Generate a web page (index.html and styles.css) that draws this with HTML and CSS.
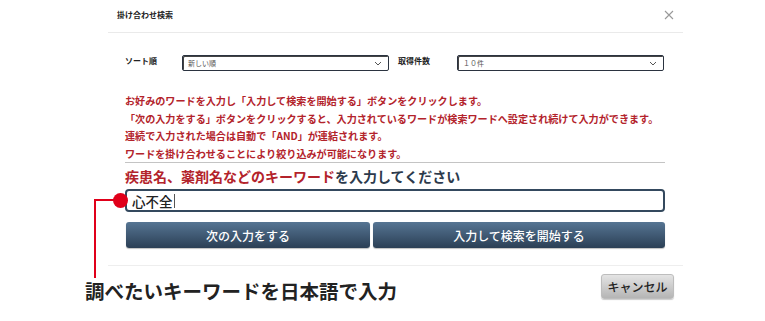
FILE: index.html
```html
<!DOCTYPE html>
<html lang="ja">
<head>
<meta charset="utf-8">
<link rel="stylesheet" href="styles.css">
</head>
<body>
<div class="page">
  <div class="modal">
    <div class="modal-header">
      <span class="modal-title">掛け合わせ検索</span>
      <span class="close">
        <svg width="10" height="10" viewBox="0 0 10 10"><path d="M1 1L9 9M9 1L1 9" stroke="#999" stroke-width="1.1" fill="none"/></svg>
      </span>
    </div>
    <div class="modal-body">
      <div class="options">
        <span class="opt-label opt-label-1">ソート順</span>
        <div class="select select-1"><span>新しい順</span><svg width="8" height="5" viewBox="0 0 8 5"><path d="M1 1L4 4L7 1" stroke="#555" stroke-width="1" fill="none"/></svg></div>
        <span class="opt-label opt-label-2">取得件数</span>
        <div class="select select-2"><span>１０件</span><svg width="8" height="5" viewBox="0 0 8 5"><path d="M1 1L4 4L7 1" stroke="#555" stroke-width="1" fill="none"/></svg></div>
      </div>
      <div class="notes">
        <p>お好みのワードを入力し「入力して検索を開始する」ボタンをクリックします。</p>
        <p>「次の入力をする」ボタンをクリックすると、入力されているワードが検索ワードへ設定され続けて入力ができます。</p>
        <p>連続で入力された場合は自動で「AND」が連結されます。</p>
        <p>ワードを掛け合わせることにより絞り込みが可能になります。</p>
      </div>
      <div class="search">
        <h2 class="search-title"><span class="accent">疾患名、薬剤名などのキーワード</span>を入力してください</h2>
        <div class="input"><span>心不全</span><span class="caret"></span></div>
        <div class="buttons">
          <button class="btn btn-next">次の入力をする</button>
          <button class="btn btn-start">入力して検索を開始する</button>
        </div>
      </div>
    </div>
    <div class="modal-footer">
      <button class="btn-cancel">キャンセル</button>
    </div>
  </div>
  <div class="annotation">
    <span class="dot"></span>
    <span class="hline"></span>
    <span class="vline"></span>
  </div>
  <div class="callout">調べたいキーワードを日本語で入力</div>
</div>
</body>
</html>
```
FILE: styles.css
```css
* { box-sizing: border-box; margin: 0; padding: 0; }
html, body { background: #fff; }
body {
  font-family: "Noto Sans CJK JP", "Noto Sans", sans-serif;
  color: #222;
  width: 765px;
  height: 321px;
  overflow: hidden;
}
.page { position: relative; width: 765px; height: 321px; }
.modal { margin-left: 108px; width: 575px; }
.modal-header {
  height: 33px;
  border-bottom: 1px solid #eaeaea;
  display: flex;
  align-items: center;
  justify-content: space-between;
  padding: 0 9px 3px 9px;
}
.modal-title { font-size: 8px; font-weight: 700; color: #222; }
.close { display: flex; }
.modal-body { padding: 22px 18px 0 17px; }
.options { display: flex; align-items: center; height: 16px; }
.opt-label { font-size: 8px; font-weight: 700; color: #222; margin-top: -6px; }
.opt-label-1 { width: 57px; }
.opt-label-2 { width: 59px; margin-left: 9px; }
.select {
  height: 16px;
  border: 1px solid #2b3340;
  border-radius: 2px;
  display: flex;
  align-items: center;
  justify-content: space-between;
  padding: 0 6px 0 5px;
  font-size: 7px;
  color: #555;
  box-shadow: inset 1px 1px 0 #444;
}
.select-1 { width: 207px; }
.select-2 { width: 207px; }
.notes { margin-top: 21px; }
.notes p {
  font-size: 10.1px;
  font-weight: 700;
  color: #b3232b;
  line-height: 17.6px;
  white-space: nowrap;
}
.search {
  width: 540px;
  border-top: 1px solid #c4c4c4;
  padding-top: 4px;
}
.search-title {
  font-size: 14px;
  font-weight: 700;
  color: #2c3a4c;
  line-height: 18px;
}
.accent { color: #b3232b; }
.input {
  margin-top: 4px;
  height: 23px;
  border: 2px solid #34495e;
  border-radius: 4px;
  display: flex;
  align-items: center;
  padding-left: 5px;
  font-size: 13.5px;
  font-weight: 500;
  color: #222;
  background: #fff;
}
.caret { display: inline-block; width: 1px; height: 14px; background: #555; margin-left: 1px; }
.buttons { display: flex; gap: 3px; margin-top: 10px; padding-left: 1px; }
.btn {
  height: 26px;
  border: none;
  border-radius: 3px;
  background: linear-gradient(#567593, #2b3f55);
  color: #fff;
  font-family: inherit;
  font-size: 12px;
  font-weight: 500;
  box-shadow: 0 1px 1px rgba(0,0,0,0.25);
}
.btn-next { width: 244px; }
.btn-start { width: 292px; }
.modal-footer {
  margin-top: 17px;
  border-top: 1px solid #eeeeee;
  display: flex;
  justify-content: flex-end;
  padding: 8px 9px 0 0;
}
.btn-cancel {
  width: 73px;
  height: 25px;
  border: 1px solid #bdbdbd;
  border-radius: 3px;
  background: linear-gradient(#e4e4e4, #b5b5b5);
  font-family: inherit;
  font-size: 12px;
  font-weight: 500;
  color: #222;
  box-shadow: 0 1px 1px rgba(0,0,0,0.2);
}
.dot {
  position: absolute;
  left: 113px;
  top: 193px;
  width: 15px;
  height: 15px;
  border-radius: 50%;
  background: #e0001a;
}
.hline {
  position: absolute;
  left: 94px;
  top: 199px;
  width: 22px;
  height: 2px;
  background: #e0001a;
}
.vline {
  position: absolute;
  left: 94px;
  top: 199px;
  width: 2px;
  height: 79px;
  background: #e0001a;
}
.callout {
  position: absolute;
  left: 85px;
  top: 278px;
  font-size: 19.5px;
  font-weight: 700;
  color: #222;
  line-height: 26px;
  white-space: nowrap;
}
```
